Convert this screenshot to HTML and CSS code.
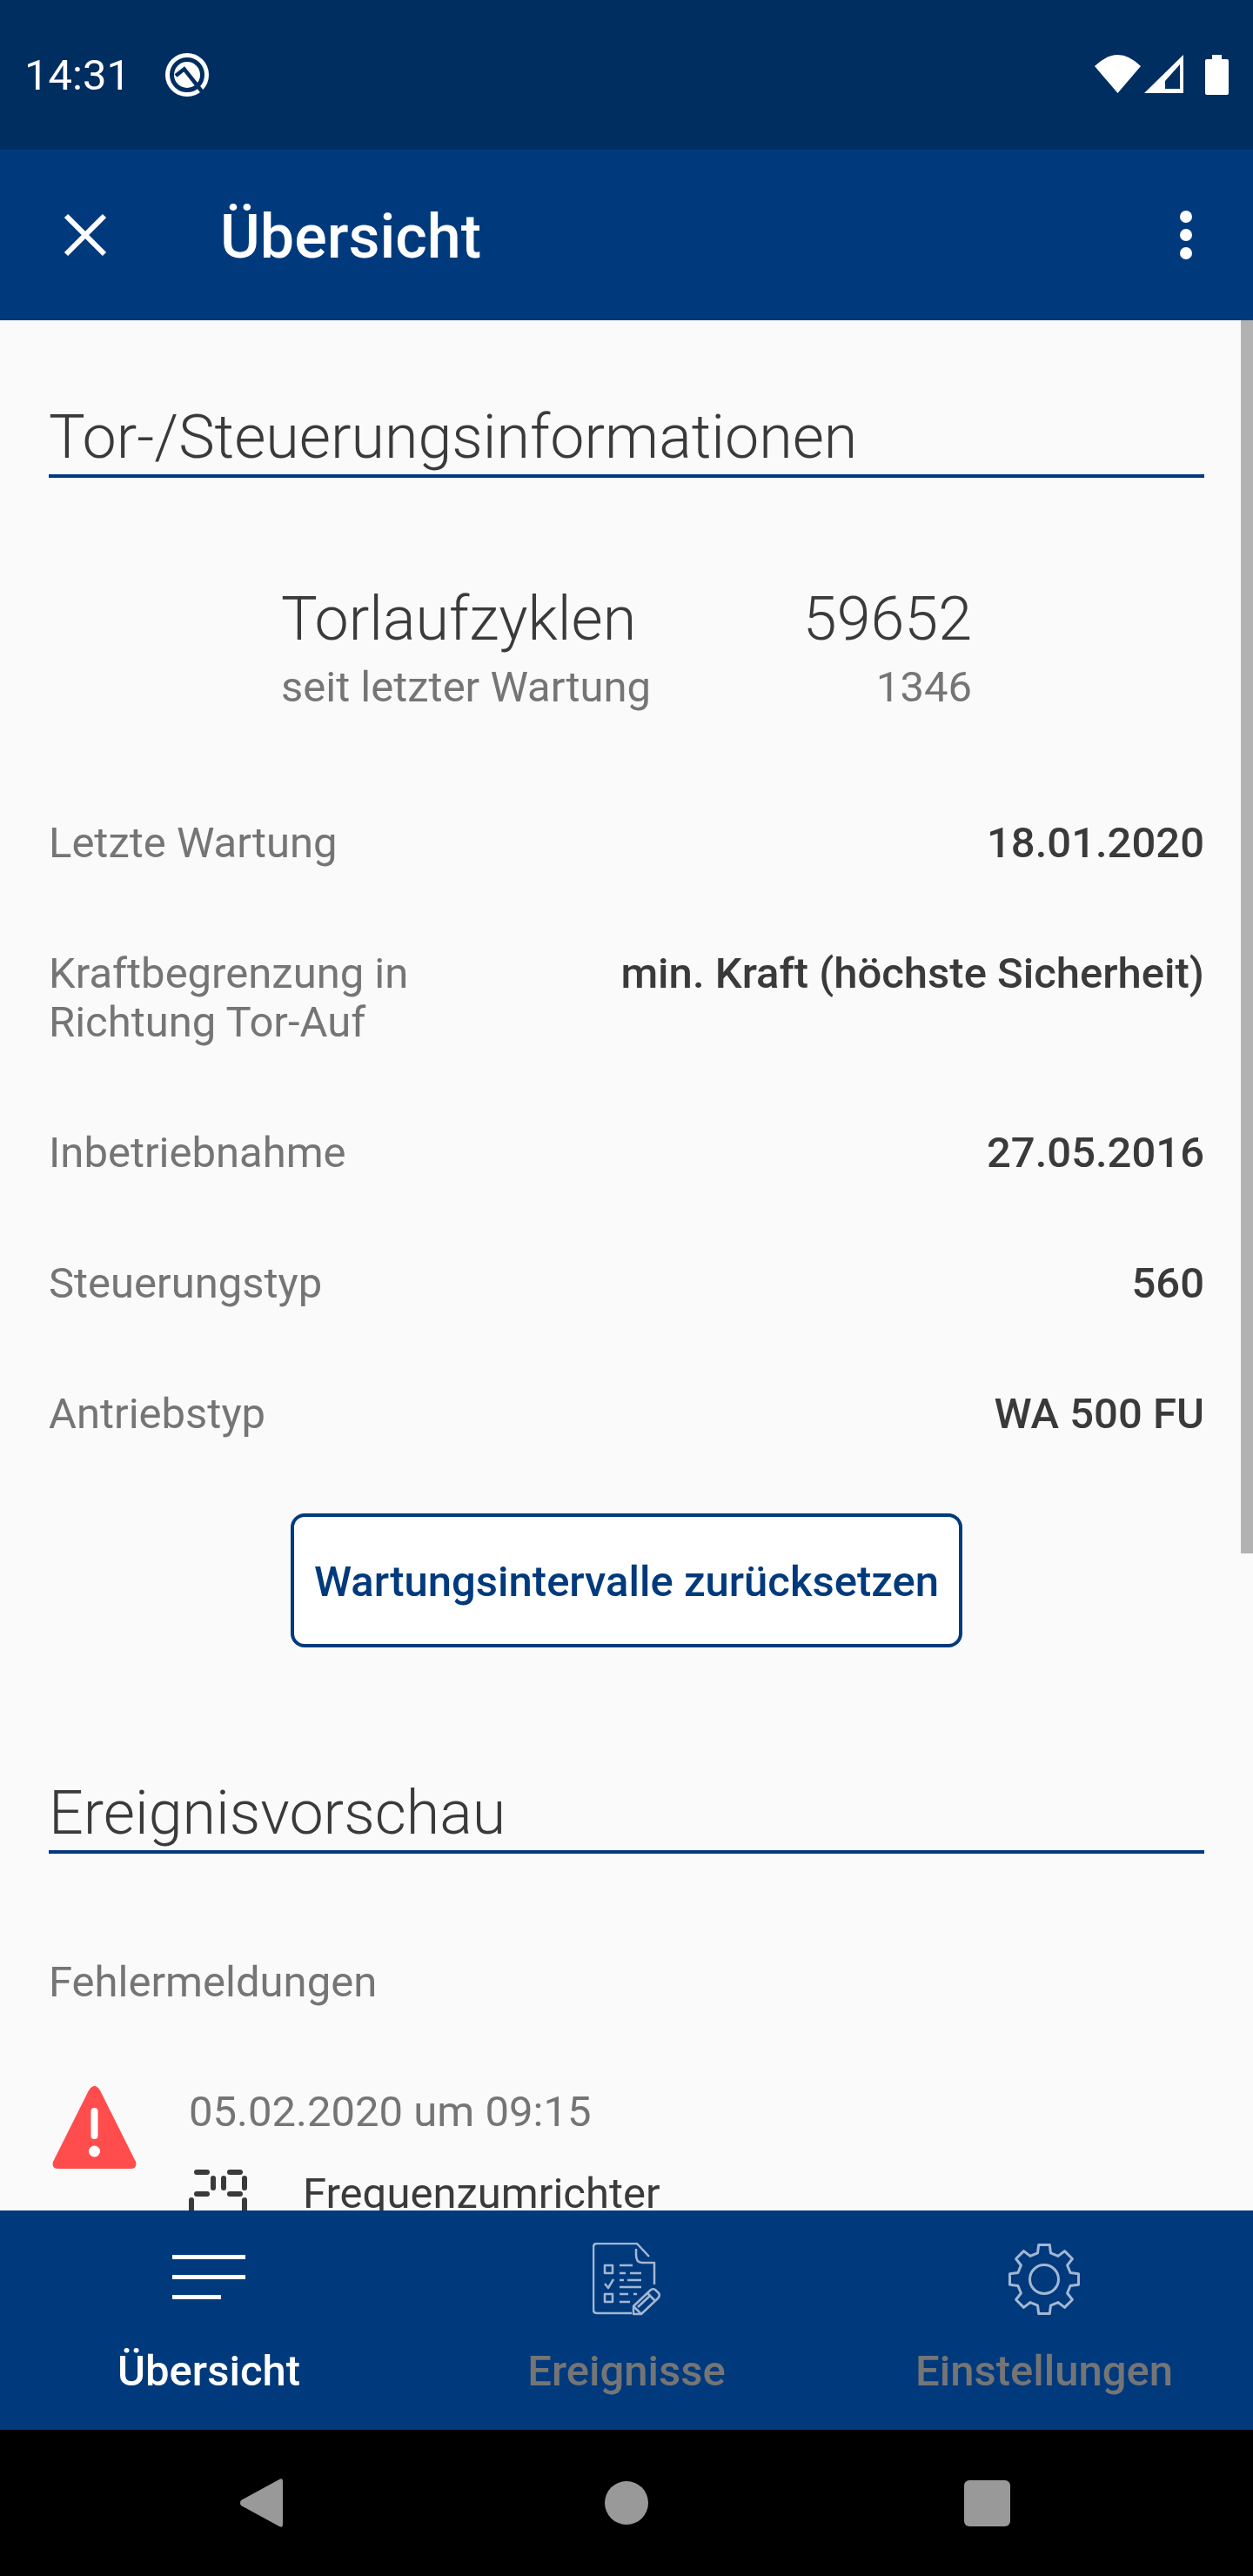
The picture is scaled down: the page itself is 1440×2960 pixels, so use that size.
FILE: index.html
```html
<!DOCTYPE html>
<html lang="de">
<head>
  <meta charset="UTF-8">
  <meta name="viewport" content="width=device-width, initial-scale=1.0">
  <title>Übersicht</title>
  <link rel="stylesheet" href="styles.css">
</head>
<body>
  <div class="screen">
    <div class="status-bar">
      <span class="status-time">14:31</span>
      <svg class="status-q" width="50" height="50" viewBox="0 0 50 50">
        <circle cx="25" cy="25" r="22.500" fill="none" stroke="#fff" stroke-width="5"/>
        <circle cx="25" cy="25" r="15" fill="#fff"/>
        <path d="M12 26 L21.700 18.300 L42 44" fill="none" stroke="#002e61" stroke-width="4.500"/>
      </svg>
      <div class="status-icons">
        <svg width="53" height="44" viewBox="0 0 53 44"><path d="M0 13 Q26.500 -13 53 13 L26.500 44 Z" fill="#fff"/></svg>
        <svg width="45" height="44" viewBox="0 0 45 44"><path d="M45 0 V44 H0 Z M41 11 L24 30 V39 H41 Z" fill="#fff" fill-rule="evenodd"/></svg>
        <svg class="status-battery" width="27" height="46" viewBox="0 0 27 46"><path d="M8 0 H19 V5 H25 Q27 5 27 7 V44 Q27 46 25 46 H2 Q0 46 0 44 V7 Q0 5 2 5 H8 Z" fill="#fff"/></svg>
      </div>
    </div>

    <div class="app-bar">
      <svg class="close-icon" width="50" height="50" viewBox="0 0 50 50"><path d="M3 3 L47 47 M47 3 L3 47" stroke="#fff" stroke-width="6"/></svg>
      <h1 class="app-title">Übersicht</h1>
      <div class="more-icon"><span></span><span></span><span></span></div>
    </div>

    <div class="content">
      <div class="scroll-thumb"></div>

      <h2 class="section-title">Tor-/Steuerungsinformationen</h2>

      <div class="cycles">
        <div class="cycles-names">
          <div class="cycles-main">Torlaufzyklen</div>
          <div class="cycles-sub">seit letzter Wartung</div>
        </div>
        <div class="cycles-values">
          <div class="cycles-main">59652</div>
          <div class="cycles-sub">1346</div>
        </div>
      </div>

      <div class="info-row">
        <span class="info-label">Letzte Wartung</span>
        <span class="info-value">18.01.2020</span>
      </div>
      <div class="info-row">
        <span class="info-label">Kraftbegrenzung in<br>Richtung Tor-Auf</span>
        <span class="info-value">min. Kraft (höchste Sicherheit)</span>
      </div>
      <div class="info-row">
        <span class="info-label">Inbetriebnahme</span>
        <span class="info-value">27.05.2016</span>
      </div>
      <div class="info-row">
        <span class="info-label">Steuerungstyp</span>
        <span class="info-value">560</span>
      </div>
      <div class="info-row">
        <span class="info-label">Antriebstyp</span>
        <span class="info-value">WA 500 FU</span>
      </div>

      <button class="reset-button">Wartungsintervalle zurücksetzen</button>

      <h2 class="section-title events-title">Ereignisvorschau</h2>

      <div class="info-label errors-label">Fehlermeldungen</div>

      <div class="event">
        <svg class="event-warning" width="97" height="96" viewBox="0 0 97 96">
          <path d="M42 6 Q48.500 -4 55 6 L96 88 Q98 96 90 96 H7 Q-1 96 1 88 Z" fill="#ff4d4d"/>
          <rect x="44.500" y="26" width="8" height="36" rx="4" fill="#fff"/>
          <circle cx="48.500" cy="76" r="6.500" fill="#fff"/>
        </svg>
        <div class="event-body">
          <div class="event-date">05.02.2020 um 09:15</div>
          <div class="event-detail">
            <svg class="event-code" width="67" height="56" viewBox="0 0 67 56">
              <g fill="#3a3a3a">
                <rect x="6" y="0" width="18" height="6" rx="3"/>
                <rect x="25" y="7" width="6" height="17" rx="3"/>
                <rect x="6" y="25" width="18" height="6" rx="3"/>
                <rect x="0" y="32" width="6" height="24" rx="3"/>
                <rect x="44" y="0" width="18" height="6" rx="3"/>
                <rect x="37" y="7" width="6" height="17" rx="3"/>
                <rect x="61" y="7" width="6" height="17" rx="3"/>
                <rect x="44" y="25" width="18" height="6" rx="3"/>
                <rect x="61" y="32" width="6" height="24" rx="3"/>
              </g>
            </svg>
            <span class="event-text">Frequenzumrichter</span>
          </div>
        </div>
      </div>
    </div>

    <nav class="tab-bar">
      <div class="tab tab-active">
        <svg class="tab-icon" width="84" height="84" viewBox="0 0 84 84">
          <path d="M0 16.500 H84 M0 39.500 H84 M0 62.500 H56" stroke="#fff" stroke-width="5"/>
        </svg>
        <span class="tab-label">Übersicht</span>
      </div>
      <div class="tab">
        <svg class="tab-icon" width="78" height="84" viewBox="0 0 78 84">
          <g fill="none" stroke="#a3b7d3" stroke-width="2.500" stroke-linejoin="round">
            <path d="M45 81 H5 Q1 81 1 77 V5 Q1 1 5 1 H51 L65 16"/>
            <path d="M50 7 V14 Q50 23 57 23 H71 V48"/>
            <rect x="14" y="26" width="9" height="9"/>
            <rect x="14" y="59" width="9" height="9"/>
            <path d="M14 47 L18 52 L24 42"/>
            <path d="M31 26 H46 M31 35 H38 M43 35 H56 M31 43 H36 M40 43 H56 M31 51 H56 M31 59 H41 M47 59 H51 M31 68 H43"/>
            <path d="M47 82 V73 L66 55 Q69 52 72 54 L76 58 Q78 61 75 64 L56 82 Z M47 73 L56 82 M63 58 L72 67 M52 74 L67 60"/>
          </g>
        </svg>
        <span class="tab-label">Ereignisse</span>
      </div>
      <div class="tab">
        <svg class="tab-icon" width="84" height="84" viewBox="0 0 84 84">
          <g fill="none" stroke="#a3b7d3" stroke-width="3" stroke-linejoin="round">
            <path d="M34.500 11.900 L35.700 2.500 H48.300 L49.500 11.900 L58 15.400 L65.500 9.600 L74.400 18.500 L68.600 26 L72.100 34.500 L81.500 35.700 V48.300 L72.100 49.500 L68.600 58 L74.400 65.500 L65.500 74.400 L58 68.600 L49.500 72.100 L48.300 81.500 H35.700 L34.500 72.100 L26 68.600 L18.500 74.400 L9.600 65.500 L15.400 58 L11.900 49.500 L2.500 48.300 V35.700 L11.900 34.500 L15.400 26 L9.600 18.500 L18.500 9.600 L26 15.400 Z"/>
            <circle cx="42" cy="42" r="16.500"/>
          </g>
        </svg>
        <span class="tab-label">Einstellungen</span>
      </div>
    </nav>

    <div class="system-nav">
      <svg width="49" height="56" viewBox="0 0 49 56"><path d="M1 25 L45 1 Q49 -1 49 3 V53 Q49 57 45 55 L1 31 Q-1 28 1 25 Z" fill="#999"/></svg>
      <div class="nav-circle"></div>
      <div class="nav-square"></div>
    </div>
  </div>
</body>
</html>
```

FILE: styles.css
```css
* {
  box-sizing: border-box;
}

body {
  margin: 0;
  font-family: Roboto, "Liberation Sans", sans-serif;
  background: #fafafa;
}

.screen {
  width: 1440px;
  height: 2960px;
  display: flex;
  flex-direction: column;
  overflow: hidden;
}

.status-bar {
  height: 172px;
  background: #002e61;
  color: white;
  display: flex;
  align-items: flex-start;
  padding: 55px 28px 0 28px;
}

.status-time {
  margin-top: 1px;
  font-size: 49px;
  line-height: 62px;
  width: 162px;
  color: #fff;
}

.status-q {
  margin-top: 6px;
}

.status-icons {
  margin-left: auto;
  margin-top: 8px;
  display: flex;
  align-items: flex-start;
  gap: 4px;
}

.status-battery {
  margin-left: 21px;
}

.app-bar {
  height: 196px;
  background: #003a7d;
  display: flex;
  align-items: center;
  padding: 0 70px 0 73px;
}

.app-title {
  margin: 4px 0 0 130px;
  font-size: 70px;
  font-weight: 500;
  color: white;
}

.more-icon {
  margin-left: auto;
  display: flex;
  flex-direction: column;
  gap: 7px;
}

.more-icon span {
  width: 14px;
  height: 14px;
  border-radius: 50%;
  background: white;
}

.content {
  position: relative;
  flex: 1;
  overflow: hidden;
  padding: 93px 56px 0 56px;
  background: #fafafa;
}

.scroll-thumb {
  position: absolute;
  top: 0;
  right: 0;
  width: 14px;
  height: 1417px;
  background: #b2b2b2;
}

.section-title {
  margin: 0;
  font-size: 70px;
  font-weight: 300;
  line-height: 82px;
  color: #3a3a3a;
  padding-bottom: 2px;
  border-bottom: 4px solid #003a7d;
}

.cycles {
  display: flex;
  justify-content: space-between;
  padding: 0 267px;
  margin-top: 121px;
  margin-bottom: 122px;
}

.cycles-values {
  text-align: right;
}

.cycles-main {
  font-size: 70px;
  font-weight: 300;
  line-height: 82px;
  color: #3a3a3a;
}

.cycles-sub {
  margin-top: 9px;
  font-size: 49px;
  line-height: 58px;
  color: #757575;
}

.info-row {
  display: flex;
  justify-content: space-between;
  margin-bottom: 94px;
}

.info-label {
  font-size: 49px;
  line-height: 56px;
  color: #757575;
}

.info-value {
  font-size: 49px;
  font-weight: 500;
  line-height: 56px;
  color: #3a3a3a;
}

.reset-button {
  display: block;
  width: 772px;
  height: 154px;
  margin: -8px auto 0;
  padding-top: 4px;
  background: white;
  border: 4px solid #003a7d;
  border-radius: 16px;
  font-family: inherit;
  font-size: 49px;
  font-weight: 500;
  color: #003a7d;
}

.events-title {
  margin-top: 149px;
}

.errors-label {
  margin-top: 120px;
}

.event {
  display: flex;
  margin-top: 90px;
  margin-left: 4px;
}

.event-warning {
  flex-shrink: 0;
}

.event-body {
  margin-left: 60px;
}

.event-date {
  margin-top: 1px;
  font-size: 49px;
  line-height: 60px;
  color: #757575;
}

.event-detail {
  display: flex;
  align-items: flex-start;
  margin-top: 36px;
}

.event-text {
  margin-left: 64px;
  font-size: 49px;
  line-height: 56px;
  color: #3a3a3a;
}

.tab-bar {
  height: 252px;
  background: #003a7d;
  display: grid;
  grid-template-columns: 1fr 1fr 1fr;
  flex-shrink: 0;
}

.tab {
  display: flex;
  flex-direction: column;
  align-items: center;
  padding-top: 37px;
}

.tab-label {
  margin-top: 35px;
  font-size: 49px;
  font-weight: 500;
  line-height: 58px;
  color: #757575;
}

.tab-active .tab-label {
  color: white;
}

.system-nav {
  height: 168px;
  background: black;
  flex-shrink: 0;
  display: flex;
  align-items: center;
  padding-left: 276px;
  gap: 370px;
}

.nav-circle {
  width: 50px;
  height: 50px;
  border-radius: 50%;
  background: #999;
}

.nav-square {
  width: 53px;
  height: 53px;
  margin-left: -7px;
  border-radius: 6px;
  background: #999;
}
```
